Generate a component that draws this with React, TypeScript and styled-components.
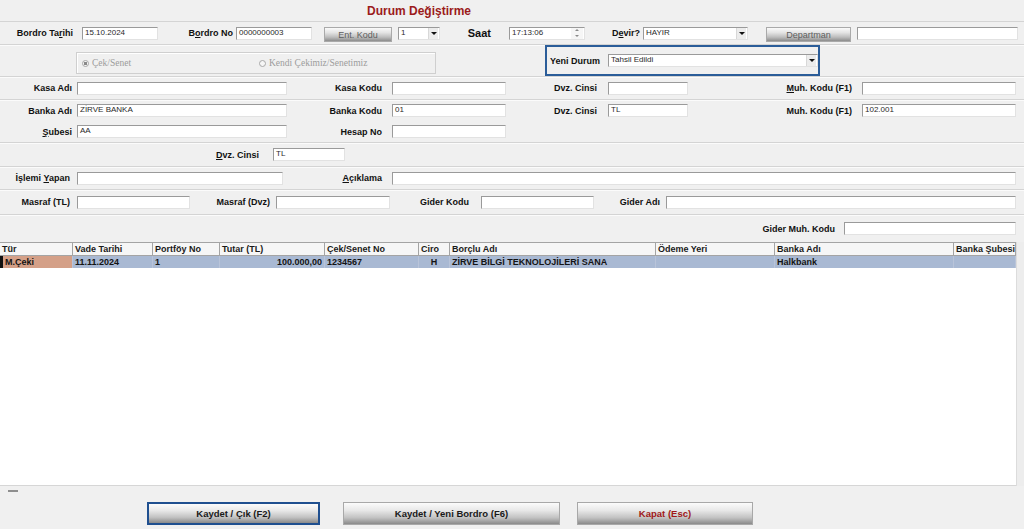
import styled, { createGlobalStyle } from 'styled-components';

const GlobalStyle = createGlobalStyle`
  html, body {
    margin: 0;
    padding: 0;
    background: #f0f0f0;
  }
  body {
    font-family: "Liberation Sans", Arial, sans-serif;
  }
  * {
    box-sizing: border-box;
  }
`;

const Window = styled.div`
  width: 1024px;
  height: 529px;
  display: flex;
  flex-direction: column;
  background: #f0f0f0;
  overflow: hidden;
`;

const TitleBar = styled.div`
  height: 22px;
  flex-shrink: 0;
  display: flex;
  align-items: center;
  padding-left: 367px;
  border-bottom: 1px solid #d4d4d4;
  font-size: 12px;
  font-weight: bold;
  color: #9b1b1b;
`;

const Row = styled.div<{ $h: number; $sep?: boolean; $stretch?: boolean }>`
  height: ${(p) => p.$h}px;
  flex-shrink: 0;
  display: flex;
  align-items: ${(p) => (p.$stretch ? 'stretch' : 'center')};
  border-bottom: ${(p) => (p.$sep ? '1px solid #d4d4d4' : 'none')};
  box-shadow: ${(p) => (p.$sep ? '0 1px 0 #fbfbfb' : 'none')};
`;

const Label = styled.span<{ $w: number; $size?: number }>`
  width: ${(p) => p.$w}px;
  flex-shrink: 0;
  text-align: right;
  white-space: nowrap;
  font-size: ${(p) => p.$size ?? 9}px;
  font-weight: bold;
  color: #111;
`;

const Input = styled.div<{ $w: number; $ml?: number }>`
  width: ${(p) => p.$w}px;
  margin-left: ${(p) => p.$ml ?? 0}px;
  height: 13px;
  flex-shrink: 0;
  position: relative;
  background: #fff;
  border: 1px solid;
  border-color: #9a9a9a #e2e2e2 #e2e2e2 #9a9a9a;
  padding-left: 2px;
  font-size: 8px;
  line-height: 10px;
  color: #2a2a2a;
  white-space: nowrap;
  overflow: hidden;
`;

const DropButton = styled.span`
  position: absolute;
  right: 1px;
  top: 0;
  width: 10px;
  height: 11px;
  background: #ececec;
  border-left: 1px solid #d8d8d8;
  display: flex;
  align-items: center;
  justify-content: center;
  &::after {
    content: '';
    border-left: 3px solid transparent;
    border-right: 3px solid transparent;
    border-top: 3px solid #111;
  }
`;

const Spinner = styled.span`
  position: absolute;
  right: 1px;
  top: 0;
  width: 12px;
  height: 11px;
  display: flex;
  flex-direction: column;
  align-items: center;
  justify-content: space-around;
  background: #f6f6f6;
`;

const SpinArrow = styled.span<{ $up?: boolean }>`
  width: 0;
  height: 0;
  border-left: 2px solid transparent;
  border-right: 2px solid transparent;
  ${(p) => (p.$up ? 'border-bottom: 2px solid #8a8a8a;' : 'border-top: 2px solid #8a8a8a;')}
`;

const SmallButton = styled.div<{ $w: number; $ml: number }>`
  width: ${(p) => p.$w}px;
  margin-left: ${(p) => p.$ml}px;
  height: 15px;
  margin-top: 3px;
  flex-shrink: 0;
  display: flex;
  align-items: center;
  justify-content: center;
  border: 1px solid #a9a9a9;
  background: linear-gradient(#fafafa 0%, #e4e4e4 35%, #bdbdbd 70%, #8c8c8c 100%);
  font-size: 9px;
  color: #5e5e5e;
`;

const GroupBox = styled.div`
  width: 360px;
  height: 22px;
  margin-left: 76px;
  margin-top: 7px;
  align-self: flex-start;
  display: flex;
  align-items: center;
  padding-left: 5px;
  border: 1px solid #cfcfcf;
  box-shadow: inset 1px 1px 0 #fff;
`;

const RadioItem = styled.div<{ $w?: number }>`
  width: ${(p) => (p.$w ? `${p.$w}px` : 'auto')};
  display: flex;
  align-items: center;
  gap: 3px;
  font-family: "Liberation Serif", "Times New Roman", serif;
  font-size: 9.5px;
  color: #9c9c9c;
`;

const RadioDot = styled.span<{ $on?: boolean }>`
  width: 7px;
  height: 7px;
  border-radius: 50%;
  border: 1px solid #a8a8a8;
  background: ${(p) => (p.$on ? 'radial-gradient(circle, #8a8a8a 0 1.5px, #f4f4f4 2px)' : '#f6f6f6')};
`;

const StatusBox = styled.div`
  width: 275px;
  margin-left: 109px;
  display: flex;
  align-items: center;
  border: 2px solid #2b5d99;
  padding-left: 3px;
`;

const StatusLabel = styled.span`
  font-size: 9px;
  font-weight: bold;
  color: #111;
  width: 58px;
  flex-shrink: 0;
`;

const GridWrap = styled.div`
  height: 244px;
  flex-shrink: 0;
  display: flex;
`;

const GridArea = styled.div`
  width: 1016px;
  background: #fff;
  border-top: 1px solid #a4a4a4;
  border-bottom: 1px solid #d6d6d6;
`;

const Strip = styled.div`
  flex: 1;
  background: #ededed;
  border-left: 1px solid #dcdcdc;
`;

const GridRow = styled.div`
  display: grid;
  grid-template-columns: 73px 80px 67px 105px 94px 31px 206px 119px 179px 62px;
`;

const HeadCell = styled.div`
  height: 13px;
  padding-left: 2px;
  background: #f6f6f6;
  border-right: 1px solid #a4a4a4;
  border-bottom: 1px solid #a4a4a4;
  font-size: 9px;
  font-weight: bold;
  line-height: 12px;
  color: #1a1a1a;
  white-space: nowrap;
  overflow: hidden;
`;

const Cell = styled.div<{ $align?: 'left' | 'right' | 'center'; $type?: boolean }>`
  height: 12px;
  padding: 0 2px;
  background: ${(p) => (p.$type ? '#d4a088' : '#a9b9d3')};
  border-right: 1px solid #b9c4d9;
  border-left: ${(p) => (p.$type ? '3px solid #111' : 'none')};
  text-align: ${(p) => p.$align ?? 'left'};
  font-size: 9px;
  font-weight: bold;
  line-height: 12px;
  color: #141414;
  white-space: nowrap;
  overflow: hidden;
`;

const BottomBar = styled.div`
  flex: 1;
  display: flex;
  flex-direction: column;
`;

const Dash = styled.span`
  width: 10px;
  height: 2px;
  margin: 4px 0 0 8px;
  background: #8e8e8e;
`;

const ButtonRow = styled.div`
  display: flex;
  margin-top: 10px;
`;

const ActionButton = styled.div<{ $w: number; $ml: number; $focus?: boolean; $danger?: boolean }>`
  width: ${(p) => p.$w}px;
  margin-left: ${(p) => p.$ml}px;
  height: 23px;
  display: flex;
  align-items: center;
  justify-content: center;
  border: ${(p) => (p.$focus ? '2px solid #1f4f8f' : '1px solid #a8a8a8')};
  background: linear-gradient(#fbfbfb 0%, #e8e8e8 35%, #c2c2c2 70%, #8a8a8a 100%);
  font-size: 9.5px;
  font-weight: bold;
  color: ${(p) => (p.$danger ? '#a01919' : '#1a1a1a')};
`;

type FieldProps = {
  label: React.ReactNode;
  lw: number;
  gap: number;
  iw: number;
  value?: string;
};

function Field({ label, lw, gap, iw, value }: FieldProps) {
  return (
    <>
      <Label $w={lw}>{label}</Label>
      <Input $w={iw} $ml={gap}>
        {value}
      </Input>
    </>
  );
}

function Select({ w, ml, value }: { w: number; ml: number; value: string }) {
  return (
    <Input $w={w} $ml={ml}>
      {value}
      <DropButton />
    </Input>
  );
}

const columns = [
  'Tür',
  'Vade Tarihi',
  'Portföy No',
  'Tutar (TL)',
  'Çek/Senet No',
  'Ciro',
  'Borçlu Adı',
  'Ödeme Yeri',
  'Banka Adı',
  'Banka Şubesi',
];

export default function App() {
  return (
    <Window>
      <GlobalStyle />
      <TitleBar>Durum Değiştirme</TitleBar>

      <Row $h={23} $sep>
        <Field label={<>Bordro Ta<u>r</u>ihi</>} lw={73} gap={9} iw={76} value="15.10.2024" />
        <Field label={<>B<u>o</u>rdro No</>} lw={75} gap={3} iw={76} value="0000000003" />
        <SmallButton $w={68} $ml={12}>Ent. Kodu</SmallButton>
        <Select w={42} ml={6} value="1" />
        <Label $w={51} $size={11}>Saat</Label>
        <Input $w={76} $ml={18}>
          17:13:06
          <Spinner>
            <SpinArrow $up />
            <SpinArrow />
          </Spinner>
        </Input>
        <Label $w={55}>D<u>e</u>vir?</Label>
        <Select w={105} ml={3} value="HAYIR" />
        <SmallButton $w={85} $ml={18}>Departman</SmallButton>
        <Input $w={161} $ml={6} />
      </Row>

      <Row $h={32} $sep $stretch>
        <GroupBox>
          <RadioItem $w={177}>
            <RadioDot $on />
            Çek/Senet
          </RadioItem>
          <RadioItem>
            <RadioDot />
            Kendi Çekimiz/Senetimiz
          </RadioItem>
        </GroupBox>
        <StatusBox>
          <StatusLabel>Yeni Durum</StatusLabel>
          <Select w={210} ml={0} value="Tahsil Edildi" />
        </StatusBox>
      </Row>

      <Row $h={23} $sep>
        <Field label="Kasa Adı" lw={72} gap={5} iw={210} />
        <Field label="Kasa Kodu" lw={95} gap={10} iw={114} />
        <Field label="Dvz. Cinsi" lw={91} gap={11} iw={80} />
        <Field label={<><u>M</u>uh. Kodu (F1)</>} lw={164} gap={10} iw={154} />
      </Row>

      <Row $h={21}>
        <Field label="Banka Adı" lw={72} gap={5} iw={210} value="ZİRVE BANKA" />
        <Field label="Banka Kodu" lw={95} gap={10} iw={114} value="01" />
        <Field label="Dvz. Cinsi" lw={91} gap={11} iw={80} value="TL" />
        <Field label="Muh. Kodu (F1)" lw={164} gap={10} iw={154} value="102.001" />
      </Row>
      <Row $h={22} $sep>
        <Field label={<><u>Ş</u>ubesi</>} lw={72} gap={5} iw={210} value="AA" />
        <Field label="Hesap No" lw={95} gap={10} iw={114} />
      </Row>

      <Row $h={24} $sep>
        <Field label={<><u>D</u>vz. Cinsi</>} lw={259} gap={14} iw={72} value="TL" />
      </Row>

      <Row $h={23} $sep>
        <Field label={<>İşlemi <u>Y</u>apan</>} lw={70} gap={7} iw={206} />
        <Field label={<><u>A</u>çıklama</>} lw={99} gap={10} iw={624} />
      </Row>

      <Row $h={25} $sep>
        <Field label="Masraf (TL)" lw={70} gap={7} iw={113} />
        <Field label="Masraf (Dvz)" lw={80} gap={6} iw={114} />
        <Field label="Gider Kodu" lw={79} gap={12} iw={113} />
        <Field label="Gider Adı" lw={66} gap={6} iw={350} />
      </Row>

      <Row $h={27}>
        <Field label="Gider Muh. Kodu" lw={835} gap={9} iw={172} />
      </Row>

      <GridWrap>
        <GridArea>
          <GridRow>
            {columns.map((c) => (
              <HeadCell key={c}>{c}</HeadCell>
            ))}
          </GridRow>
          <GridRow>
            <Cell $type>M.Çeki</Cell>
            <Cell>11.11.2024</Cell>
            <Cell>1</Cell>
            <Cell $align="right">100.000,00</Cell>
            <Cell>1234567</Cell>
            <Cell $align="center">H</Cell>
            <Cell>ZİRVE BİLGİ TEKNOLOJİLERİ SANA</Cell>
            <Cell />
            <Cell>Halkbank</Cell>
            <Cell />
          </GridRow>
        </GridArea>
        <Strip />
      </GridWrap>

      <BottomBar>
        <Dash />
        <ButtonRow>
          <ActionButton $w={173} $ml={147} $focus>
            Kaydet / Çık (F2)
          </ActionButton>
          <ActionButton $w={217} $ml={23}>
            Kaydet / Yeni Bordro (F6)
          </ActionButton>
          <ActionButton $w={176} $ml={17} $danger>
            Kapat (Esc)
          </ActionButton>
        </ButtonRow>
      </BottomBar>
    </Window>
  );
}
